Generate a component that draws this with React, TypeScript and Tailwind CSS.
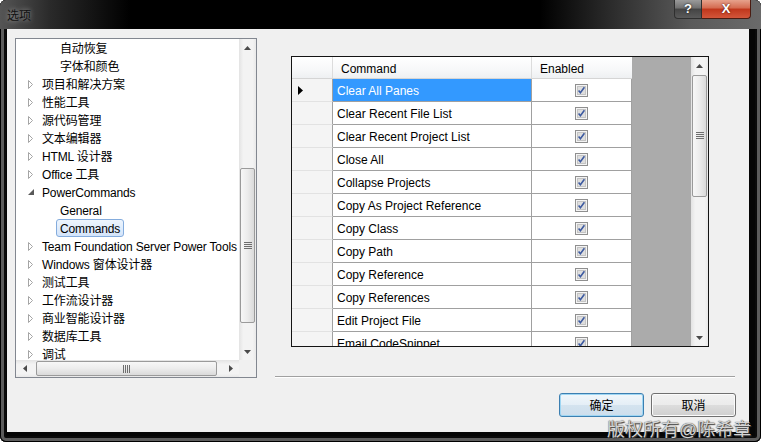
import React from "react";

const font = "font-['Liberation_Sans','Noto_Sans_CJK_SC',sans-serif]";

type TreeItem = {
  label: string;
  level: 1 | 2;
  arrow?: "closed" | "open";
  selected?: boolean;
};

const treeItems: TreeItem[] = [
  { label: "自动恢复", level: 2 },
  { label: "字体和颜色", level: 2 },
  { label: "项目和解决方案", level: 1, arrow: "closed" },
  { label: "性能工具", level: 1, arrow: "closed" },
  { label: "源代码管理", level: 1, arrow: "closed" },
  { label: "文本编辑器", level: 1, arrow: "closed" },
  { label: "HTML 设计器", level: 1, arrow: "closed" },
  { label: "Office 工具", level: 1, arrow: "closed" },
  { label: "PowerCommands", level: 1, arrow: "open" },
  { label: "General", level: 2 },
  { label: "Commands", level: 2, selected: true },
  { label: "Team Foundation Server Power Tools", level: 1, arrow: "closed" },
  { label: "Windows 窗体设计器", level: 1, arrow: "closed" },
  { label: "测试工具", level: 1, arrow: "closed" },
  { label: "工作流设计器", level: 1, arrow: "closed" },
  { label: "商业智能设计器", level: 1, arrow: "closed" },
  { label: "数据库工具", level: 1, arrow: "closed" },
  { label: "调试", level: 1, arrow: "closed" },
];

const commands = [
  "Clear All Panes",
  "Clear Recent File List",
  "Clear Recent Project List",
  "Close All",
  "Collapse Projects",
  "Copy As Project Reference",
  "Copy Class",
  "Copy Path",
  "Copy Reference",
  "Copy References",
  "Edit Project File",
  "Email CodeSnippet",
];

function ScrollArrow({ dir }: { dir: "up" | "down" | "left" | "right" }) {
  const paths = {
    up: "M0 4 L3.5 0 L7 4 Z",
    down: "M0 0 L3.5 4 L7 0 Z",
    left: "M4 0 L0 3.5 L4 7 Z",
    right: "M0 0 L4 3.5 L0 7 Z",
  };
  const vertical = dir === "up" || dir === "down";
  return (
    <svg width={vertical ? 7 : 4} height={vertical ? 4 : 7} viewBox={vertical ? "0 0 7 4" : "0 0 4 7"}>
      <path d={paths[dir]} fill="#4a4a4a" />
    </svg>
  );
}

function Gripper({ vertical }: { vertical: boolean }) {
  return vertical ? (
    <svg width="8" height="8" viewBox="0 0 8 8">
      {[0, 2, 4, 6].map((y) => (
        <rect key={y} x="0" y={y} width="8" height="1" fill="#6e6e6e" />
      ))}
    </svg>
  ) : (
    <svg width="8" height="8" viewBox="0 0 8 8">
      {[0, 2, 4, 6].map((x) => (
        <rect key={x} x={x} y="0" width="1" height="8" fill="#6e6e6e" />
      ))}
    </svg>
  );
}

function TreeArrow({ kind }: { kind: "closed" | "open" }) {
  if (kind === "open") {
    return (
      <svg width="6" height="6" viewBox="0 0 6 6">
        <path d="M6 0 L6 6 L0 6 Z" fill="#595959" />
      </svg>
    );
  }
  return (
    <svg width="6" height="9" viewBox="0 0 6 9">
      <path d="M0.5 0.5 L4.5 4.5 L0.5 8.5 Z" fill="#ffffff" stroke="#a5a5a5" />
    </svg>
  );
}

function CheckBox() {
  return (
    <svg width="13" height="13" viewBox="0 0 13 13">
      <rect x="0.5" y="0.5" width="12" height="12" fill="#f4f4f4" stroke="#8f8f8f" />
      <rect x="2.5" y="2.5" width="8" height="8" fill="#dedede" stroke="#c4c4c4" />
      <path d="M3.6 6.6 L5.4 8.8 L9.4 3.2" stroke="#3d5aa0" strokeWidth="1.6" fill="none" />
    </svg>
  );
}

function TreePanel() {
  return (
    <div className="flex h-[340px] w-[242px] flex-col border border-[#828790] bg-white">
      <div className="flex h-[321px]">
        <div className="w-[223px] shrink-0 overflow-hidden tracking-[-0.15px]">
          {treeItems.map((item) => (
            <div key={item.label} className="flex h-[18px] items-center whitespace-nowrap text-[12px] text-black">
              {item.level === 1 ? (
                <>
                  <div className="box-content flex w-[13px] shrink-0 items-center pl-[12px]">
                    {item.arrow && <TreeArrow kind={item.arrow} />}
                  </div>
                  <span className="shrink-0 pl-px pt-[2px]">{item.label}</span>
                </>
              ) : (
                <span
                  className={
                    item.selected
                      ? "ml-[40px] flex h-[18px] shrink-0 items-center rounded-[3px] border border-[#84acdd] bg-[linear-gradient(#eef5fd,#d3e4fa)] px-[3px] pt-[2px]"
                      : "ml-[40px] flex h-[18px] shrink-0 items-center border border-transparent px-[3px] pt-[2px]"
                  }
                >
                  {item.label}
                </span>
              )}
            </div>
          ))}
        </div>
        <div className="flex w-[17px] shrink-0 flex-col bg-[linear-gradient(to_right,#e3e3e3,#f3f3f3_25%,#f3f3f3_80%,#e9e9e9)]">
          <div className="flex h-[17px] items-center justify-center">
            <ScrollArrow dir="up" />
          </div>
          <div className="h-[112px]" />
          <div className="mx-[1px] flex h-[155px] items-center justify-center rounded-[2px] border border-[#9a9a9a] bg-[linear-gradient(to_right,#f7f7f7,#ececec_50%,#dadada)]">
            <Gripper vertical />
          </div>
          <div className="flex-1" />
          <div className="flex h-[17px] items-center justify-center">
            <ScrollArrow dir="down" />
          </div>
        </div>
      </div>
      <div className="flex h-[17px]">
        <div className="flex w-[223px] bg-[linear-gradient(#e3e3e3,#f3f3f3_25%,#f3f3f3_80%,#e9e9e9)]">
          <div className="flex w-[17px] items-center justify-center">
            <ScrollArrow dir="left" />
          </div>
          <div className="w-[3px]" />
          <div className="my-[1px] flex w-[181px] items-center justify-center rounded-[2px] border border-[#9a9a9a] bg-[linear-gradient(#f7f7f7,#ececec_50%,#dadada)]">
            <Gripper vertical={false} />
          </div>
          <div className="flex-1" />
          <div className="flex w-[17px] items-center justify-center">
            <ScrollArrow dir="right" />
          </div>
        </div>
        <div className="w-[17px] bg-[#f0f0f0]" />
      </div>
    </div>
  );
}

function CommandGrid() {
  return (
    <div className="flex h-[291px] w-[418px] border border-[#141414] bg-white">
      <div className="flex w-[340px] flex-col overflow-hidden">
        <div className="flex h-[22px] shrink-0 border-b border-[#d5d5d5] bg-[linear-gradient(#ffffff,#f7f8f9_60%,#eef0f2)] text-[12px] text-black">
          <div className="w-[41px] border-r border-[#dcdcdc]" />
          <div className="flex w-[199px] items-center border-r border-[#dcdcdc] pl-[8px] pt-[2px]">Command</div>
          <div className="flex w-[100px] items-center pl-[8px] pt-[2px]">Enabled</div>
        </div>
        {commands.map((cmd, i) => (
          <div key={cmd} className="flex h-[23px] shrink-0 text-[12px]">
            <div className="flex w-[41px] items-center border-b border-r border-b-[#e2e2e2] border-r-[#a0a0a0] bg-[#f4f4f4] pl-[6px]">
              {i === 0 && (
                <svg width="5" height="9" viewBox="0 0 5 9">
                  <path d="M0 0 L5 4.5 L0 9 Z" fill="#000000" />
                </svg>
              )}
            </div>
            <div
              className={
                i === 0
                  ? "flex w-[199px] items-center border-b border-r border-[#a0a0a0] bg-[#3399ff] pl-[4px] pt-[2px] text-white"
                  : "flex w-[199px] items-center border-b border-r border-[#a0a0a0] pl-[4px] pt-[2px] text-black"
              }
            >
              {cmd}
            </div>
            <div className="flex w-[100px] items-center justify-center border-b border-r border-[#a0a0a0]">
              <CheckBox />
            </div>
          </div>
        ))}
      </div>
      <div className="flex-1 bg-[#ababab]" />
      <div className="flex w-[17px] flex-col bg-[linear-gradient(to_right,#e3e3e3,#f3f3f3_25%,#f3f3f3_80%,#e9e9e9)]">
        <div className="flex h-[17px] items-center justify-center">
          <ScrollArrow dir="up" />
        </div>
        <div className="h-[1px]" />
        <div className="mx-[1px] flex h-[122px] items-center justify-center rounded-[2px] border border-[#9a9a9a] bg-[linear-gradient(to_right,#f7f7f7,#ececec_50%,#dadada)]">
          <Gripper vertical />
        </div>
        <div className="flex-1" />
        <div className="flex h-[17px] items-center justify-center">
          <ScrollArrow dir="down" />
        </div>
      </div>
    </div>
  );
}

export default function App() {
  return (
    <div className={`${font} h-[444px] w-[761px] bg-white`}>
      <div className="relative flex h-[442px] w-[761px] flex-col overflow-hidden rounded-[6px] bg-[#050505] shadow-[inset_0_0_0_1px_#000,inset_0_0_0_4px_#5c5c5c,inset_0_0_0_6px_#0a0a0a]">
        {/* Title bar */}
        <div className="flex h-[29px] shrink-0 items-start justify-between bg-[linear-gradient(to_right,#555555_0px,#2a2a2a_50px,#000000_130px,#000000_540px,#2b2b2b_610px,#5a5a5a_690px,#6a6a6a)] pr-[10px]">
          <div className="pl-[7px] pt-[7px] text-[12px] text-[#111] [text-shadow:0_0_5px_rgba(255,255,255,0.55)]">选项</div>
          <div className="flex">
            <div className="flex h-[19px] w-[28px] items-center justify-center rounded-bl-[4px] border border-t-0 border-[#2f2f2f] bg-[linear-gradient(#9a9a9a,#707070_45%,#444444_50%,#5a5a5a)] text-[13px] font-bold text-white [text-shadow:0_0_2px_#000]">
              ?
            </div>
            <div className="flex h-[19px] w-[49px] items-center justify-center rounded-br-[4px] border border-l-0 border-t-0 border-[#4a1c12] bg-[linear-gradient(#e6a28c,#d46a4f_45%,#c0361b_50%,#d3563a)] text-[13px] font-bold text-white [text-shadow:0_0_2px_#3a0a00]">
              X
            </div>
          </div>
        </div>

        {/* Client area */}
        <div className="flex pl-[7px] pr-[12px]">
          <div className="flex h-[403px] w-[742px] flex-col bg-[#f0f0f0]">
            <div className="flex pl-[8px] pt-[9px]">
              <TreePanel />
              <div className="ml-[18px] flex h-[340px] w-[460px] flex-col justify-between">
                <div className="ml-[16px] mt-[18px]">
                  <CommandGrid />
                </div>
                <div className="h-[2px] border-b border-t border-[#a0a0a0] border-b-white" />
              </div>
            </div>
            <div className="mt-[15px] flex justify-end gap-[7px] pr-[13px] text-[12px] text-black">
              <div className="flex h-[24px] w-[85px] items-center justify-center rounded-[3px] border border-[#3c7fb1] bg-[linear-gradient(#f1f7fb,#e4eef6_50%,#d4e3ef_50%,#cddeec)] pt-px shadow-[inset_0_0_0_1px_#9fd6f3]">
                确定
              </div>
              <div className="flex h-[24px] w-[85px] items-center justify-center rounded-[3px] border border-[#707070] bg-[linear-gradient(#f2f2f2,#ebebeb_50%,#dddddd_50%,#cfcfcf)] pt-px shadow-[inset_0_0_0_1px_#fbfbfb]">
                取消
              </div>
            </div>
          </div>
        </div>

        {/* Watermark */}
        <div className="absolute left-[607px] top-[419px] whitespace-nowrap text-[18px] leading-[22px] text-[#d4d4d4] [text-shadow:0_0_1px_#222,1px_1px_1px_#444]">
          版权所有@陈希章
        </div>
      </div>
    </div>
  );
}
